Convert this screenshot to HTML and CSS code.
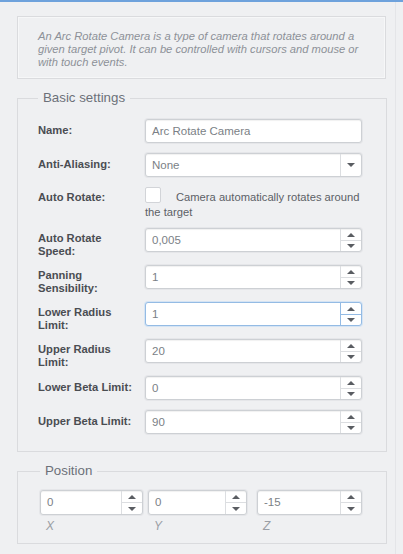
FILE: index.html
```html
<!DOCTYPE html>
<html>
<head>
<meta charset="utf-8">
<link rel="stylesheet" href="styles.css">
</head>
<body>
<div class="panel">
  <div class="desc">An Arc Rotate Camera is a type of camera that rotates around a given target pivot. It can be controlled with cursors and mouse or with touch events.</div>

  <fieldset class="group basic">
    <legend>Basic settings</legend>
    <div class="row">
      <label class="lbl">Name:</label>
      <div class="field"><span class="val">Arc Rotate Camera</span></div>
    </div>
    <div class="row">
      <label class="lbl">Anti-Aliasing:</label>
      <div class="field"><span class="val">None</span><span class="drop"><i class="tri down"></i></span></div>
    </div>
    <div class="row check-row">
      <label class="lbl">Auto Rotate:</label>
      <div class="check-text"><span class="box"></span>Camera automatically rotates around the target</div>
    </div>
    <div class="row">
      <label class="lbl two">Auto Rotate Speed:</label>
      <div class="field"><span class="val">0,005</span><span class="spin"><span><i class="tri up"></i></span><span><i class="tri down"></i></span></span></div>
    </div>
    <div class="row">
      <label class="lbl two">Panning Sensibility:</label>
      <div class="field"><span class="val">1</span><span class="spin"><span><i class="tri up"></i></span><span><i class="tri down"></i></span></span></div>
    </div>
    <div class="row">
      <label class="lbl two">Lower Radius Limit:</label>
      <div class="field focus"><span class="val">1</span><span class="spin"><span><i class="tri up"></i></span><span><i class="tri down"></i></span></span></div>
    </div>
    <div class="row">
      <label class="lbl two">Upper Radius Limit:</label>
      <div class="field"><span class="val">20</span><span class="spin"><span><i class="tri up"></i></span><span><i class="tri down"></i></span></span></div>
    </div>
    <div class="row">
      <label class="lbl">Lower Beta Limit:</label>
      <div class="field"><span class="val">0</span><span class="spin"><span><i class="tri up"></i></span><span><i class="tri down"></i></span></span></div>
    </div>
    <div class="row">
      <label class="lbl">Upper Beta Limit:</label>
      <div class="field"><span class="val">90</span><span class="spin"><span><i class="tri up"></i></span><span><i class="tri down"></i></span></span></div>
    </div>
  </fieldset>

  <fieldset class="group pos">
    <legend>Position</legend>
    <div class="xyz">
      <div class="coord">
        <div class="field"><span class="val">0</span><span class="spin"><span><i class="tri up"></i></span><span><i class="tri down"></i></span></span></div>
        <div class="axis">X</div>
      </div>
      <div class="coord">
        <div class="field"><span class="val">0</span><span class="spin"><span><i class="tri up"></i></span><span><i class="tri down"></i></span></span></div>
        <div class="axis">Y</div>
      </div>
      <div class="coord">
        <div class="field"><span class="val">-15</span><span class="spin"><span><i class="tri up"></i></span><span><i class="tri down"></i></span></span></div>
        <div class="axis">Z</div>
      </div>
    </div>
  </fieldset>
</div>
</body>
</html>
```

FILE: styles.css
```css
html, body {
  margin: 0;
  padding: 0;
  background: #eff0f2;
}
body {
  font-family: "Liberation Sans", Arial, sans-serif;
  border-top: 2px solid #6ea2dc;
  height: 552px;
  overflow: hidden;
}
.panel {
  padding: 14px 0 0 17px;
  box-sizing: content-box;
  border-right: 1px solid #e4e5e8;
  min-height: 540px;
  width: 378px;
}
.desc {
  width: 369px;
  box-sizing: border-box;
  border: 1px solid #dadbde;
  box-shadow: inset 0 0 0 1px #f6f7f8;
  padding: 13px 20px 9px 20px;
  font-size: 11.2px;
  line-height: 13px;
  font-style: italic;
  color: #8d9198;
  margin-bottom: 11px;
}
.group {
  width: 370px;
  box-sizing: border-box;
  margin: 0;
  border: 1px solid #dadbde;
  padding: 13px 24px 7px 20px;
}
.group legend {
  padding: 0 5px;
  margin-left: 0;
  font-size: 13.3px;
  line-height: 16px;
  color: #6c7079;
}
.basic {
  margin-bottom: 11px;
}
.row {
  display: flex;
  align-items: flex-start;
  margin-bottom: 10px;
}
.lbl {
  width: 107px;
  flex: none;
  font-size: 11.2px;
  font-weight: bold;
  color: #4a4d52;
  line-height: 13px;
  padding-top: 5px;
}
.lbl.two {
  padding-top: 4px;
  padding-right: 30px;
  box-sizing: border-box;
  margin-bottom: -3px;
}
.field {
  flex: 1;
  display: flex;
  height: 24px;
  box-sizing: border-box;
  background: #fff;
  border: 1px solid #cdd0d4;
  border-radius: 3px;
  box-shadow: 0 0 0 1px #e5e6e9, inset 0 1px 1px rgba(0,0,0,0.06);
}
.field.focus {
  border-color: #94bbe4;
  box-shadow: 0 0 0 1px #d5e4f4;
}
.val {
  flex: 1;
  font-size: 11.5px;
  line-height: 22px;
  color: #7b7f86;
  padding-left: 6px;
  white-space: nowrap;
  overflow: hidden;
}
.drop, .spin {
  width: 20px;
  flex: none;
  border-left: 1px solid #dcdee1;
  display: flex;
  flex-direction: column;
  align-items: center;
  justify-content: center;
}
.focus .spin {
  border-left-color: #94bbe4;
}
.spin > span {
  flex: 1;
  width: 100%;
  display: flex;
  align-items: center;
  justify-content: center;
}
.spin > span:first-child {
  border-bottom: 1px solid #dcdee1;
}
.focus .spin > span:first-child {
  border-bottom-color: #94bbe4;
}
.tri {
  display: block;
  width: 0;
  height: 0;
  border-left: 4px solid transparent;
  border-right: 4px solid transparent;
}
.tri.up {
  border-bottom: 4px solid #5a5d62;
  margin-top: 1px;
}
.tri.down {
  border-top: 4px solid #5a5d62;
}
.check-row {
  margin-bottom: 8px;
}
.check-row .lbl {
  padding-top: 4px;
}
.check-text {
  flex: 1;
  font-size: 11.2px;
  line-height: 15px;
  color: #5c6066;
  padding-top: 3px;
}
.box {
  display: inline-block;
  width: 16px;
  height: 16px;
  box-sizing: border-box;
  background: #fff;
  border: 1px solid #d2d4d8;
  border-radius: 2px;
  vertical-align: top;
  margin-top: -3px;
  margin-right: 15px;
}
.pos {
  padding-top: 11px;
  padding-bottom: 10px;
  padding-left: 22px;
}
.xyz {
  display: grid;
  grid-template-columns: 103px 99px 105px;
  column-gap: 5px;
}
.coord:last-child {
  margin-left: 5px;
  margin-right: -5px;
}
.coord .field {
  height: 25px;
}
.axis {
  font-size: 12px;
  font-style: italic;
  color: #9a9ea5;
  padding: 4px 0 0 6px;
  line-height: 14px;
}
```
